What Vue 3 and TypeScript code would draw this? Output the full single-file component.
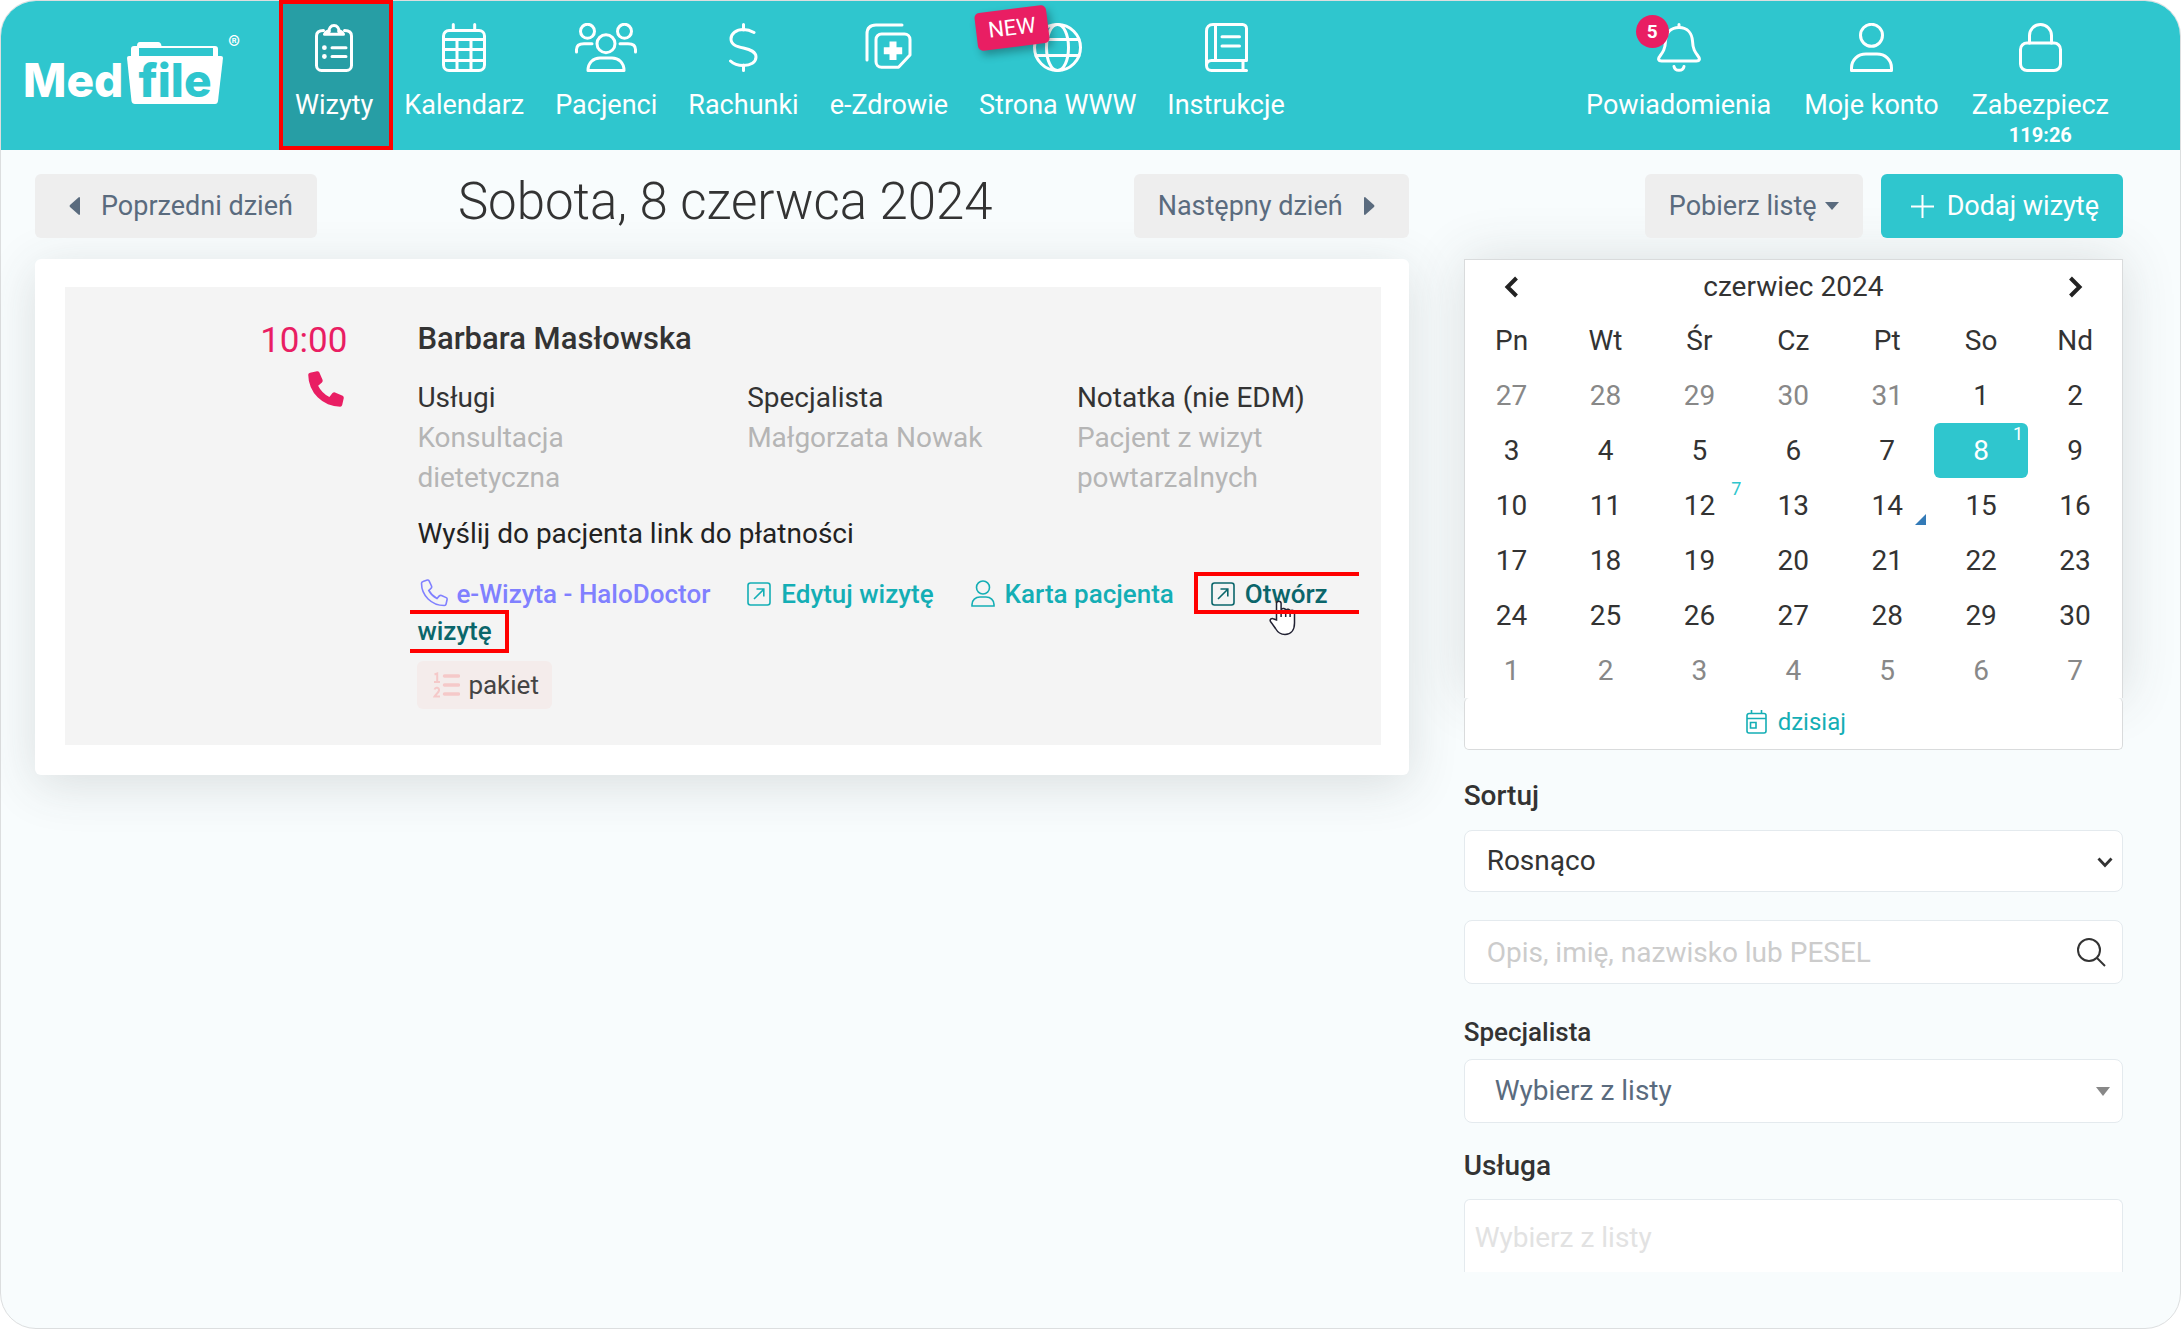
<script setup lang="ts">
import { ref } from 'vue'

interface NavItem {
  label: string
  width: number
  strokes: string[]
  fill?: string
  active?: boolean
  tag?: string
  badge?: number
  timer?: string
}

const mainNav: NavItem[] = [
  {
    label: 'Wizyty',
    width: 38,
    active: true,
    strokes: [
      'M8.500 7.500C4 7.500 1.500 9 1.500 13V42.500a5 5 0 0 0 5 5H31.500a5 5 0 0 0 5-5V13C36.500 9 34 7.500 29.500 7.500',
      'M9.500 11.300H28.500C27 8.500 25 8 24 8M9.500 11.300C11 8.500 13 8 14 8',
      'M14.200 8.500a4.900 4.900 0 1 1 9.600 0',
      'M17 24.700H31M17 33.500H31',
    ],
    fill: 'M7 24.700a2.400 2.400 0 1 0 4.800 0a2.400 2.400 0 1 0-4.800 0M7 33.500a2.400 2.400 0 1 0 4.800 0a2.400 2.400 0 1 0-4.800 0',
  },
  {
    label: 'Kalendarz',
    width: 44,
    strokes: [
      'M7 7.500H37a5.500 5.500 0 0 1 5.500 5.500V42a5.500 5.500 0 0 1-5.500 5.500H7A5.500 5.500 0 0 1 1.500 42V13A5.500 5.500 0 0 1 7 7.500z',
      'M1.500 16.500H42.500M1.500 26.500H42.500M1.500 37.500H42.500M15 16.500V47.500M29 16.500V47.500M11.300 1.500V7M32.700 1.500V7',
    ],
  },
  {
    label: 'Pacjenci',
    width: 62,
    strokes: [
      'M22 20.700a9 9 0 1 0 18 0a9 9 0 1 0-18 0',
      'M5.500 8.300a7 7 0 1 0 14 0a7 7 0 1 0-14 0M42.500 8.300a7 7 0 1 0 14 0a7 7 0 1 0-14 0',
      'M1.500 29V26.500C1.500 22 5 20.700 9 20.700H17M60.500 29V26.500C60.500 22 57 20.700 53 20.700H45',
      'M13 47.500C13 39.500 18.500 35 25 35H37C43.500 35 49 39.500 49 47.500z',
    ],
  },
  {
    label: 'Rachunki',
    width: 29,
    strokes: [
      'M14.500 1.500V7M14.500 42V47.500',
      'M25 9.500C21.500 7.500 18 6.500 14.500 6.500C7 6.500 2 10.500 2 16C2 22 8 23.500 14.500 25C21.500 26.600 27 28.500 27 34C27 39.500 21.500 42.500 14.500 42.500C9.500 42.500 4.500 41 1.500 38',
    ],
  },
  {
    label: 'e-Zdrowie',
    width: 47,
    strokes: [
      'M37 2H11C5 2 2 5 2 11V37',
      'M16.500 11H39.500a5.500 5.500 0 0 1 5.500 5.500V32L33.500 44.300H16.500a5.500 5.500 0 0 1-5.500-5.500V16.500a5.500 5.500 0 0 1 5.500-5.500z',
    ],
    fill: 'M24.500 18.500h7v5.700h5.700v7h-5.700v5.700h-7v-5.700h-5.700v-7h5.700z',
  },
  {
    label: 'Strona WWW',
    width: 49,
    tag: 'NEW',
    strokes: [
      'M1.500 24.500a23 23 0 1 0 46 0a23 23 0 1 0-46 0',
      'M13.500 24.500C13.500 12 18 1.500 24.500 1.500S35.500 12 35.500 24.500S31 47.500 24.500 47.500S13.500 37 13.500 24.500',
      'M3 16.500H46M3 32.500H46',
    ],
  },
  {
    label: 'Instrukcje',
    width: 43,
    strokes: [
      'M1.500 42V8C1.500 4 4 1.500 8 1.500H37.500a4 4 0 0 1 4 4V37.500H6.500C3 37.500 1.500 39.500 1.500 42.500C1.500 45.500 3.500 47.500 6.500 47.500H41.500',
      'M10.500 1.500V37.500M38 37.500V47.500M17 13.700H34.500M17 23H34.500',
    ],
  },
]

const sideNav: NavItem[] = [
  {
    label: 'Powiadomienia',
    width: 44,
    badge: 5,
    strokes: [
      'M22 4.500C13 4.500 9 11 8.500 18C8.200 26 6 29 3 33C.500 36 1.500 38 4.500 38H39.500C42.500 38 43.500 36 41 33C38 29 35.800 26 35.500 18C35 11 31 4.500 22 4.500z',
      'M22 1.500V4.500M17 43.500C18 48.500 26 48.500 27 43.500',
    ],
  },
  {
    label: 'Moje konto',
    width: 43,
    strokes: [
      'M10.500 12.300a11 11 0 1 0 22 0a11 11 0 1 0-22 0',
      'M1.500 45C1.500 36.500 8 31 16 31H27C35 31 41.500 36.500 41.500 45V47.500H1.500z',
    ],
  },
  {
    label: 'Zabezpiecz',
    width: 43,
    timer: '119:26',
    strokes: [
      'M8 20H35a6.500 6.500 0 0 1 6.500 6.500V41a6.500 6.500 0 0 1-6.500 6.500H8A6.500 6.500 0 0 1 1.500 41V26.500A6.500 6.500 0 0 1 8 20z',
      'M10.500 20V12.500a11 11 0 0 1 22 0V20',
    ],
  },
]

const details = [
  { title: 'Usługi', text: 'Konsultacja dietetyczna' },
  { title: 'Specjalista', text: 'Małgorzata Nowak' },
  { title: 'Notatka (nie EDM)', text: 'Pacjent z wizyt powtarzalnych' },
]

interface Day {
  day: number
  outside: boolean
  selected: boolean
  count?: number
  marked: boolean
}

const weekdays = ['Pn', 'Wt', 'Śr', 'Cz', 'Pt', 'So', 'Nd']
const visitCounts: Record<number, number> = { 8: 1, 12: 7 }

const weeks: Day[][] = Array.from({ length: 6 }, (_, week) =>
  Array.from({ length: 7 }, (_, weekday) => {
    const date = new Date(2024, 4, 27 + week * 7 + weekday)
    const day = date.getDate()
    const outside = date.getMonth() !== 5
    return {
      day,
      outside,
      selected: !outside && day === 8,
      count: outside ? undefined : visitCounts[day],
      marked: !outside && day === 14,
    }
  }),
)

const sort = ref('asc')
const specialist = ref('')
const query = ref('')
const service = ref('')
</script>

<template>
  <div class="page">
    <header class="topbar">
      <a href="#" class="logo" aria-label="MedFile">
        <span class="logo-med">Med</span>
        <span class="logo-folder">
          <svg class="folder" width="96" height="62" viewBox="0 0 96 62" aria-hidden="true">
            <path d="M4 15V7q0-3 3-3h3q0-4 3-4h18q3 0 3.500 4H88q3 0 3 3v8h-5V6H12v9z" fill="#fff" />
            <path d="M2 14H94q2 0 2 2L91 59q-.400 3-3 3H8q-3 0-3.500-3L0 16q0-2 2-2z" fill="#fff" />
          </svg>
          <span class="logo-file">file</span>
        </span>
        <span class="logo-mark">®</span>
      </a>
      <nav class="nav">
        <a v-for="item in mainNav" :key="item.label" href="#" class="nav-item" :class="{ active: item.active }">
          <svg class="nav-icon" :width="item.width" height="49" :viewBox="`0 0 ${item.width} 49`" aria-hidden="true">
            <path v-for="d in item.strokes" :key="d" :d="d" class="line" />
            <path v-if="item.fill" :d="item.fill" fill="#fff" />
          </svg>
          <span class="nav-label">{{ item.label }}</span>
          <span v-if="item.tag" class="tag">{{ item.tag }}</span>
        </a>
      </nav>
      <nav class="nav nav-side">
        <a v-for="item in sideNav" :key="item.label" href="#" class="nav-item">
          <svg class="nav-icon" :width="item.width" height="49" :viewBox="`0 0 ${item.width} 49`" aria-hidden="true">
            <path v-for="d in item.strokes" :key="d" :d="d" class="line" />
          </svg>
          <span class="nav-label">{{ item.label }}</span>
          <span v-if="item.timer" class="timer">{{ item.timer }}</span>
          <span v-if="item.badge" class="badge">{{ item.badge }}</span>
        </a>
      </nav>
    </header>

    <main class="content">
      <section class="visits">
        <div class="bar">
          <button type="button" class="btn btn-prev">
            <svg width="11" height="18" viewBox="0 0 11 18" aria-hidden="true"><path d="M11 1v16q0 1-1 1L1 10q-1-1 0-2L10 0q1 0 1 1z" fill="currentColor" /></svg>
            Poprzedni dzień
          </button>
          <h1 class="title">Sobota, 8 czerwca 2024</h1>
          <button type="button" class="btn btn-next">
            Następny dzień
            <svg width="11" height="18" viewBox="0 0 11 18" aria-hidden="true"><path d="M0 1v16q0 1 1 1L10 10q1-1 0-2L1 0Q0 0 0 1z" fill="currentColor" /></svg>
          </button>
        </div>

        <div class="card">
          <article class="visit">
            <div class="when">
              <time class="hour">10:00</time>
              <svg class="call" width="36" height="36" viewBox="0 0 16 16" aria-hidden="true">
                <path d="M.900 .800L4 .100q.700-.100 1 .500L6.500 4q.200.600-.300 1.100L4.500 6.500a11 11 0 0 0 5 5l1.400-1.700q.500-.500 1.100-.300l3.400 1.500q.600.300.500 1l-.700 3.100q-.200.800-.900.800A14.300 14.300 0 0 1 .100 1.700Q.100 1 .900 .800z" fill="currentColor" />
              </svg>
            </div>
            <div class="info">
              <h2 class="patient">Barbara Masłowska</h2>
              <dl class="details">
                <div v-for="item in details" :key="item.title">
                  <dt>{{ item.title }}</dt>
                  <dd>{{ item.text }}</dd>
                </div>
              </dl>
              <p class="payment">Wyślij do pacjenta link do płatności</p>
              <div class="actions">
                <a href="#" class="action halo"><svg class="glyph glyph-call" width="28" height="28" viewBox="0 0 28 28" aria-hidden="true"><path d="M3 2.500L7.300 1q1.200-.300 1.800.900L11.500 7q.500 1.300-.400 2.200L8.800 11.500a20 20 0 0 0 8.200 8l2.300-2.600q.900-.900 2.200-.400l4.700 2.100q1.200.600.900 1.900l-1 4.500q-.300 1.500-1.800 1.500C11.500 26.500 1.500 16.500 1.500 4.300Q1.500 2.900 3 2.500z" /></svg>e-Wizyta - HaloDoctor</a><a href="#" class="action"><svg class="glyph" width="24" height="24" viewBox="0 0 24 24" aria-hidden="true"><rect x="1" y="1" width="22" height="22" rx="2.500" /><path d="M7 17L16.500 7.500M9.500 7H16.800V14.500" /></svg>Edytuj wizytę</a><a href="#" class="action"><svg class="glyph glyph-tall" width="24" height="27" viewBox="0 0 24 27" aria-hidden="true"><circle cx="12" cy="7.500" r="6.500" /><path d="M1 26V24.500C1 20 4.500 17 9 17H15C19.500 17 23 20 23 24.500V26z" /></svg>Karta pacjenta</a><a href="#" class="action open"><span class="open-first"><svg class="glyph" width="24" height="24" viewBox="0 0 24 24" aria-hidden="true"><rect x="1" y="1" width="22" height="22" rx="2.500" /><path d="M7 17L16.500 7.500M9.500 7H16.800V14.500" /></svg>Otwórz<svg class="pointer" width="28" height="36" viewBox="0 0 28 36" aria-hidden="true"><path d="M7.500 20V3.500a2.300 2.300 0 0 1 4.600 0V12V10.500a2.300 2.300 0 0 1 4.600 0.500a2.200 2.200 0 0 1 4.400 1a2.200 2.200 0 0 1 4.400 1.500V23C25.500 30 22 34.500 16 34.500C11 34.500 8.500 32 6.500 28.500L1.500 21.500C.300 19.500 2.800 17.500 4.800 19z" fill="#fff" stroke="#223" stroke-width="1.500" /><path d="M12.100 11V17M16.700 12V17M21.100 13V17" stroke="#223" stroke-width="1.500" /></svg></span> <span class="open-last">wizytę</span></a>
              </div>
              <span class="package">
                <svg width="27" height="26" viewBox="0 0 27 26" aria-hidden="true">
                  <path d="M11.500 4H25.500M11.500 13H25.500M11.500 22H25.500" stroke="#f5c9c9" stroke-width="3.500" stroke-linecap="round" />
                  <path d="M1.500 2.500L4.200 1.500V9.500M1 10H7M1.500 17.500C2.500 14.500 6.500 15.500 6 18.500C5.700 20.500 3 22 1.500 24.500H7" fill="none" stroke="#f5c9c9" stroke-width="2" />
                </svg>
                pakiet
              </span>
            </div>
          </article>
        </div>
      </section>

      <aside class="side">
        <div class="bar bar-end">
          <button type="button" class="btn btn-list">
            Pobierz listę
            <svg width="14" height="8" viewBox="0 0 14 8" aria-hidden="true"><path d="M0 0H14L7 8z" fill="currentColor" /></svg>
          </button>
          <button type="button" class="btn btn-add">
            <svg width="23" height="23" viewBox="0 0 23 23" aria-hidden="true"><path d="M11.500 0V23M0 11.500H23" stroke="currentColor" stroke-width="2" /></svg>
            Dodaj wizytę
          </button>
        </div>

        <div class="calendar">
          <div class="month">
            <div class="month-head">
              <button type="button" class="arrow" aria-label="Poprzedni miesiąc">
                <svg width="15" height="22" viewBox="0 0 15 22" aria-hidden="true"><path d="M12.500 2L3.500 11L12.500 20" /></svg>
              </button>
              <span>czerwiec 2024</span>
              <button type="button" class="arrow" aria-label="Następny miesiąc">
                <svg width="15" height="22" viewBox="0 0 15 22" aria-hidden="true"><path d="M2.500 2L11.500 11L2.500 20" /></svg>
              </button>
            </div>
            <table class="days">
              <thead>
                <tr>
                  <th v-for="name in weekdays" :key="name" scope="col">{{ name }}</th>
                </tr>
              </thead>
              <tbody>
                <tr v-for="(week, index) in weeks" :key="index">
                  <td v-for="cell in week" :key="cell.day" :class="{ outside: cell.outside, selected: cell.selected }">
                    <div class="cell">
                      {{ cell.day }}
                      <span v-if="cell.count" class="count">{{ cell.count }}</span>
                      <span v-if="cell.marked" class="corner"></span>
                    </div>
                  </td>
                </tr>
              </tbody>
            </table>
          </div>
          <div class="today">
            <a href="#">
              <svg width="21" height="24" viewBox="0 0 21 24" aria-hidden="true"><path d="M3 3.500H18a2 2 0 0 1 2 2V21a2 2 0 0 1-2 2H3a2 2 0 0 1-2-2V5.500a2 2 0 0 1 2-2zM1 8.500H20M5.500 0V3.500M15.500 0V3.500M4.500 12.500H10V18H4.500z" fill="none" stroke="currentColor" stroke-width="1.600" /></svg>
              dzisiaj
            </a>
          </div>
        </div>

        <label for="sort" class="label label-sort">Sortuj</label>
        <div class="field">
          <select id="sort" v-model="sort" class="control">
            <option value="asc">Rosnąco</option>
            <option value="desc">Malejąco</option>
          </select>
          <svg class="chevron" width="16" height="11" viewBox="0 0 16 11" aria-hidden="true"><path d="M1.500 1.500L8 8.500L14.500 1.500" fill="none" stroke="#333" stroke-width="2.800" /></svg>
        </div>

        <div class="field field-search">
          <input v-model="query" type="text" class="control control-tall" placeholder="Opis, imię, nazwisko lub PESEL" aria-label="Szukaj" />
          <svg class="search" width="29" height="29" viewBox="0 0 29 29" aria-hidden="true"><circle cx="12" cy="12" r="11" /><path d="M19.500 19.500L28 28" /></svg>
        </div>

        <label for="specialist" class="label label-specialist">Specjalista</label>
        <div class="field">
          <select id="specialist" v-model="specialist" class="control control-tall muted">
            <option value="">Wybierz z listy</option>
          </select>
          <svg class="triangle" width="14" height="9" viewBox="0 0 14 9" aria-hidden="true"><path d="M0 0H14L7 9z" fill="#888" /></svg>
        </div>

        <label for="service" class="label label-service">Usługa</label>
        <input id="service" v-model="service" type="text" class="control multi" placeholder="Wybierz z listy" />
      </aside>
    </main>
  </div>
</template>

<style>
body {
  margin: 0;
  background: #fff;
}
</style>

<style scoped>
* {
  box-sizing: border-box;
}

.page {
  min-height: 100vh;
  border: 1px solid #dcdedf;
  border-radius: 36px;
  background: #f8fcfd;
  color: #333;
  font-family: Roboto, "Liberation Sans", sans-serif;
  font-size: 28px;
  line-height: 40px;
}

a {
  color: inherit;
  text-decoration: none;
}

button {
  border: 0;
  font: inherit;
}

svg {
  flex: none;
}

.topbar {
  display: flex;
  height: 149px;
  padding-right: 55px;
  border-radius: 35px 35px 0 0;
  background: #2fc6ce;
  color: #fff;
}

.logo {
  display: flex;
  align-items: flex-start;
  width: 278px;
  padding: 41px 0 0 22px;
  font-family: Inter, "Liberation Sans", sans-serif;
  font-weight: 800;
  font-size: 46px;
  line-height: 50px;
}

.logo-med {
  width: 104px;
  padding-top: 13px;
}

.logo-folder {
  position: relative;
  height: 62px;
}

.folder {
  display: block;
}

.logo-file {
  position: absolute;
  left: 0;
  right: 0;
  top: 13px;
  text-align: center;
  color: #2fc6ce;
}

.logo-mark {
  margin: -9px 0 0 5px;
  font-weight: 400;
  font-size: 18px;
  line-height: 20px;
}

.nav {
  display: flex;
}

.nav-side {
  gap: 1px;
  margin-left: auto;
}

.nav-item {
  position: relative;
  display: flex;
  flex-direction: column;
  align-items: center;
  padding: 22px 15px 0 16px;
}

.nav-side .nav-item {
  padding: 22px 16px 0;
}

.nav-item.active {
  background: #279ea5;
}

.nav-item.active::after {
  content: "";
  position: absolute;
  inset: -1px -5px 0 0;
  border: 4px solid #f00;
  box-shadow: inset -1px 0 #279ea5;
}

.line {
  fill: none;
  stroke: #fff;
  stroke-width: 3;
  stroke-linecap: round;
  stroke-linejoin: round;
}

.nav-label {
  margin-top: 13px;
  font-size: 27px;
  white-space: nowrap;
}

.timer {
  font-weight: 700;
  font-size: 20px;
  line-height: 20px;
}

.tag {
  position: absolute;
  left: calc(50% - 81px);
  top: 8px;
  width: 72px;
  border-radius: 5px;
  background: #e91e63;
  box-shadow: 3px 5px 9px rgba(0, 0, 0, 0.3);
  text-align: center;
  font-size: 22px;
  line-height: 38px;
  transform: rotate(-7deg);
}

.badge {
  position: absolute;
  left: calc(50% - 43px);
  top: 14px;
  width: 33px;
  border-radius: 50%;
  background: #e91e63;
  text-align: center;
  font-weight: 700;
  font-size: 19px;
  line-height: 33px;
}

.content {
  display: grid;
  grid-template-columns: minmax(0, 25fr) minmax(0, 12fr);
  gap: 55px;
  padding: 24px 57px 48px 34px;
}

.bar {
  display: flex;
  align-items: center;
  justify-content: space-between;
  height: 64px;
  margin-bottom: 21px;
}

.bar-end {
  justify-content: flex-end;
  gap: 18px;
}

.btn {
  display: flex;
  align-items: center;
  height: 64px;
  padding: 0 24px;
  border-radius: 6px;
  background: #eee;
  color: #5a6b7e;
  font-size: 27px;
  white-space: nowrap;
}

.btn-prev {
  gap: 21px;
  padding-left: 34px;
}

.btn-next {
  gap: 21px;
  padding-right: 34px;
}

.btn-list {
  gap: 8px;
}

.btn-add {
  gap: 13px;
  padding-left: 30px;
  background: #2fc6ce;
  color: #fff;
}

.title {
  margin: 0 0 8px;
  font-weight: 300;
  font-size: 51px;
  line-height: 56px;
  white-space: nowrap;
}

.card {
  padding: 28px 28px 30px 30px;
  border-radius: 6px;
  background: #fff;
  box-shadow: 0 10px 50px rgba(60, 70, 70, 0.16);
}

.visit {
  display: grid;
  grid-template-columns: minmax(0, 3fr) minmax(0, 10fr);
  gap: 70px;
  padding: 32px 22px 36px 0;
  background: #f4f4f4;
}

.when {
  display: flex;
  flex-direction: column;
  align-items: flex-end;
  color: #e91e63;
}

.hour {
  font-size: 35px;
  line-height: 43px;
}

.call {
  margin: 9px 3px 0 0;
}

.patient {
  margin: 0 0 19px;
  font-weight: 500;
  font-size: 31px;
}

.details {
  display: grid;
  grid-template-columns: repeat(3, minmax(0, 1fr));
  gap: 48px;
  margin: 0 0 16px;
}

.details dd {
  margin: 0;
  color: #b5b5b5;
}

.payment {
  margin: 0 0 22px;
  color: #222;
}

.actions {
  margin-bottom: 11px;
  font-weight: 500;
  font-size: 26px;
  line-height: 37px;
  color: #14aeb5;
}

.action {
  margin-right: 37px;
}

.action.open {
  margin-right: 0;
  color: #0b666b;
}

.halo {
  color: #8080ff;
}

.glyph {
  margin-right: 10px;
  vertical-align: -3px;
  fill: none;
  stroke: currentColor;
  stroke-width: 1.6;
}

.glyph-call {
  margin: 0 8px 0 3px;
  vertical-align: -4px;
}

.glyph-tall {
  vertical-align: -4px;
}

.open-first,
.open-last {
  position: relative;
}

.open-first::after,
.open-last::after {
  content: "";
  position: absolute;
  z-index: 2;
  border: 4px solid #f00;
}

.open-first::after {
  inset: -7px -31px -5px -17px;
  border-right: 0;
}

.open-last::after {
  inset: -6px -17px -7px -7px;
  border-left: 0;
}

.pointer {
  position: absolute;
  z-index: 1;
  right: 31px;
  top: 21px;
}

.package {
  display: inline-flex;
  align-items: center;
  gap: 8px;
  height: 48px;
  padding: 0 13px 0 16px;
  border-radius: 6px;
  background: #f4eceb;
  color: #444;
  font-size: 26px;
}

.calendar {
  margin-bottom: 29px;
}

.month {
  border: 1px solid #d9dbdc;
  border-bottom: 0;
  background: #fff;
  box-shadow: 0 0 50px rgba(60, 70, 70, 0.16);
}

.month-head {
  display: flex;
  align-items: center;
  justify-content: space-between;
  height: 53px;
  padding: 0 32px;
}

.arrow {
  display: flex;
  align-items: center;
  justify-content: center;
  width: 30px;
  height: 30px;
  padding: 0;
  background: none;
}

.arrow path {
  fill: none;
  stroke: #222;
  stroke-width: 4;
}

.days {
  width: 100%;
  table-layout: fixed;
  border-spacing: 0;
  text-align: center;
}

.days th,
.days td {
  height: 55px;
  padding: 0;
  font-weight: 400;
}

.cell {
  position: relative;
  line-height: 55px;
}

.outside {
  color: #888;
}

.selected .cell {
  border-radius: 6px;
  background: #2fc6ce;
  color: #fff;
}

.count {
  position: absolute;
  right: 5px;
  top: 0;
  color: #2fc6ce;
  font-size: 18px;
  line-height: 22px;
}

.selected .count {
  color: #fff;
}

.corner {
  position: absolute;
  right: 8px;
  bottom: 8px;
  border-left: 11px solid transparent;
  border-bottom: 11px solid #337ab7;
}

.today {
  position: relative;
  display: flex;
  justify-content: center;
  align-items: center;
  height: 52px;
  padding: 0 0 4px 5px;
  border: 1px solid #d9dbdc;
  border-top: 0;
  border-radius: 5px;
  background: #fff;
  color: #14aeb5;
  font-size: 24px;
}

.today a {
  display: flex;
  align-items: center;
  gap: 11px;
}

.label {
  display: block;
  font-weight: 500;
  line-height: 34px;
}

.label-sort {
  margin-bottom: 17px;
}

.label-specialist {
  margin-bottom: 10px;
  font-size: 26px;
}

.label-service {
  margin: 26px 0 16px;
}

.field {
  position: relative;
}

.field-search {
  margin: 28px 0 31px;
}

.control {
  display: block;
  width: 100%;
  height: 62px;
  padding: 0 22px;
  border: 1px solid #e4eaee;
  border-radius: 8px;
  outline: 0;
  background: #fff;
  color: #333;
  font: inherit;
  line-height: 40px;
  appearance: none;
}

.control-tall {
  height: 64px;
}

.control::placeholder {
  color: #ccc;
  opacity: 1;
}

.muted {
  padding-left: 30px;
  color: #5a6b7e;
}

.multi {
  height: 73px;
  padding: 2px 10px 0;
  border-bottom: 0;
  border-radius: 6px 6px 0 0;
}

.multi::placeholder {
  color: #e2e2e2;
}

.chevron,
.triangle,
.search {
  position: absolute;
  pointer-events: none;
}

.chevron {
  right: 10px;
  top: 27px;
}

.triangle {
  right: 13px;
  top: 28px;
}

.search {
  right: 17px;
  top: 18px;
  fill: none;
  stroke: #333;
  stroke-width: 2;
}
</style>
